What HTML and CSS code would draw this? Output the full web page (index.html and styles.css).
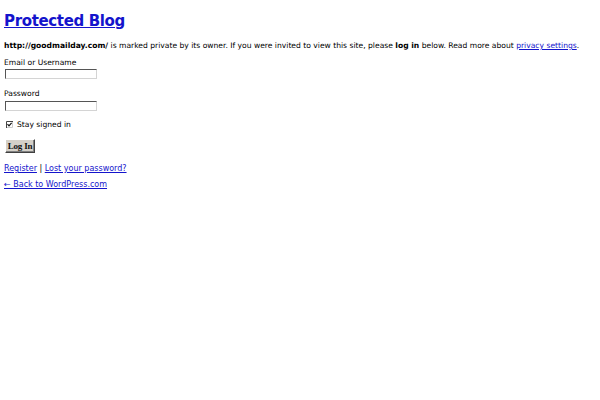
FILE: index.html
```html
<!DOCTYPE html>
<html>
<head>
<meta charset="utf-8">
<title>Protected Blog</title>
<link rel="stylesheet" href="styles.css">
</head>
<body>
<h1 class="title"><a href="#">Protected Blog</a></h1>
<p class="intro"><strong>http://goodmailday.com/</strong> is marked private by its owner. If you were invited to view this site, please <strong>log in</strong> below. Read more about <a href="#">privacy settings</a>.</p>
<form class="login">
  <label class="label" for="user">Email or Username</label>
  <input type="text" id="user" class="input">
  <label class="label label-pass" for="pass">Password</label>
  <input type="password" id="pass" class="input">
  <label class="remember">
    <svg class="check" width="7" height="7" viewBox="0 0 7 7" aria-hidden="true">
      <rect x="0" y="0" width="7" height="7" fill="#fff"/>
      <path d="M0.5 7V0.5H7" fill="none" stroke="#444" stroke-width="1"/>
      <path d="M6.5 1V6.5H1" fill="none" stroke="#ccc" stroke-width="1"/>
      <path d="M1.5 3.2L3 4.8L5.6 1.8" fill="none" stroke="#111" stroke-width="1.2"/>
    </svg>
    <span>Stay signed in</span>
  </label>
  <button type="button" class="btn">Log In</button>
</form>
<p class="links links-first"><a href="#">Register</a> | <a href="#">Lost your password?</a></p>
<p class="links links-back"><a href="#">&larr; Back to WordPress.com</a></p>
</body>
</html>
```
FILE: styles.css
```css
html, body { background: #fff; }
body {
  margin: 0;
  padding: 0 4px 4px 4px;
  font-family: "DejaVu Sans", "Verdana", sans-serif;
  font-size: 7.6px;
  line-height: 9px;
  color: #000;
}
a { color: #1414cc; }
.title {
  font-size: 15px;
  line-height: 18px;
  letter-spacing: -0.35px;
  font-weight: bold;
  margin: 12px 0 11px;
}
.intro {
  margin: 0;
  white-space: nowrap;
}
.login {
  display: flex;
  flex-direction: column;
  align-items: flex-start;
  margin-top: 8px;
}
.label { display: block; }
.label-pass { margin-top: 10px; }
.input {
  box-sizing: border-box;
  width: 92px;
  height: 10px;
  margin: 2px 0 0 1px;
  padding: 0;
  border: 1px solid;
  border-color: #555 #d4d4d4 #d4d4d4 #555;
  background: #fff;
}
#pass { margin-top: 3px; }
.remember {
  display: flex;
  align-items: center;
  gap: 4px;
  margin-top: 9px;
  height: 9px;
}
.check { display: block; margin-left: 2px; }
.btn {
  box-sizing: border-box;
  width: 30px;
  height: 14px;
  margin: 10px 0 0 1px;
  padding: 0;
  font-family: "Liberation Serif", "Times New Roman", serif;
  font-size: 9px;
  font-weight: bold;
  letter-spacing: -0.2px;
  line-height: 12px;
  color: #111;
  background: #d4d0c8;
  border: 1px solid;
  border-color: #fff #404040 #404040 #fff;
  box-shadow: inset -1px -1px 0 #808080;
}
.links { margin: 0; font-size: 8px; }
.links-first { margin-top: 11px; }
.links-back { margin-top: 7px; }
```
